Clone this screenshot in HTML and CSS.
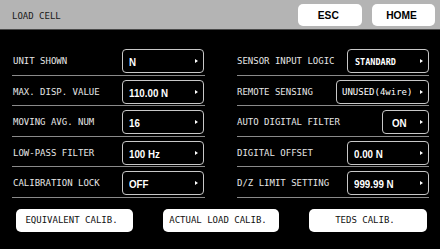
FILE: index.html
```html
<!DOCTYPE html>
<html>
<head>
<meta charset="utf-8">
<link rel="stylesheet" href="styles.css">
</head>
<body>
<div class="screen">
  <header class="top">
    <div class="title">LOAD CELL</div>
    <div class="top-btns">
      <button class="top-btn esc"><span class="cond">ESC</span></button>
      <button class="top-btn home"><span class="cond">HOME</span></button>
    </div>
  </header>
  <main class="grid">
    <div class="col left">
      <div class="row"><span class="label">UNIT SHOWN</span><div class="val w82"><span class="v">N</span><i class="arrow"></i></div></div>
      <div class="row"><span class="label">MAX. DISP. VALUE</span><div class="val w82"><span class="v">110.00 N</span><i class="arrow"></i></div></div>
      <div class="row"><span class="label">MOVING AVG. NUM</span><div class="val w82"><span class="v">16</span><i class="arrow"></i></div></div>
      <div class="row"><span class="label">LOW-PASS FILTER</span><div class="val w82"><span class="v">100 Hz</span><i class="arrow"></i></div></div>
      <div class="row"><span class="label">CALIBRATION LOCK</span><div class="val w82"><span class="v">OFF</span><i class="arrow"></i></div></div>
    </div>
    <div class="col right">
      <div class="row"><span class="label">SENSOR INPUT LOGIC</span><div class="val w82"><span class="m strong">STANDARD</span><i class="arrow"></i></div></div>
      <div class="row"><span class="label">REMOTE SENSING</span><div class="val w93"><span class="m">UNUSED(4wire)</span><i class="arrow"></i></div></div>
      <div class="row"><span class="label">AUTO DIGITAL FILTER</span><div class="val w47"><span class="v">ON</span><i class="arrow"></i></div></div>
      <div class="row"><span class="label">DIGITAL OFFSET</span><div class="val w82"><span class="v">0.00 N</span><i class="arrow"></i></div></div>
      <div class="row"><span class="label">D/Z LIMIT SETTING</span><div class="val w82"><span class="v">999.99 N</span><i class="arrow"></i></div></div>
    </div>
  </main>
  <footer class="actions">
    <button class="act b1">EQUIVALENT CALIB.</button>
    <button class="act b2">ACTUAL LOAD CALIB.</button>
    <button class="act b3">TEDS CALIB.</button>
  </footer>
</div>
</body>
</html>
```
FILE: styles.css
```css
html, body {
  margin: 0;
  padding: 0;
  background: #000;
}
.screen {
  width: 440px;
  height: 249px;
  background: #000;
  overflow: hidden;
  font-family: "DejaVu Sans Mono", "Liberation Mono", monospace;
}
.top {
  height: 29px;
  background: #b4b4b4;
  border-bottom: 1px solid #4a4a4a;
  display: flex;
  align-items: center;
  justify-content: space-between;
  padding: 0 5px 0 12px;
}
.title {
  font-size: 9px;
  color: #1a1a1a;
  padding-top: 3px;
}
.top-btns {
  display: flex;
  gap: 10px;
  align-items: center;
}
.top-btn {
  height: 22px;
  background: #fff;
  border: none;
  border-radius: 5px;
  padding: 0;
  margin: 0;
  font-family: "Liberation Sans", Arial, sans-serif;
  font-weight: bold;
  font-size: 11px;
  color: #000;
  display: flex;
  align-items: center;
  justify-content: center;
}
.top-btn.esc { width: 64px; padding-right: 3px; }
.top-btn.home { width: 63px; padding-right: 4px; }
.cond {
  display: inline-block;
  transform: scaleX(0.93);
}
.grid {
  display: grid;
  grid-template-columns: 193px 192px;
  column-gap: 32px;
  padding: 15px 0 0 12px;
}
.col {
  display: flex;
  flex-direction: column;
}
.row {
  display: flex;
  align-items: center;
  justify-content: space-between;
  padding: 4px 0 1.5px 0;
  border-bottom: 1px solid #8a8a8a;
}
.left .row { padding-left: 1px; }
.left .val { margin-right: 1px; }
.label {
  font-size: 9px;
  color: #e6e6e6;
}
.val {
  box-sizing: border-box;
  height: 24px;
  border: 1px solid #c8c8c8;
  border-radius: 4px;
  display: flex;
  align-items: center;
  justify-content: space-between;
  padding: 0 5px 0 6px;
  color: #fff;
}
.w82 { width: 82px; }
.w93 { width: 93px; padding-left: 5px; }
.w47 { width: 47px; padding-left: 9px; }
.v {
  font-family: "Liberation Sans", Arial, sans-serif;
  font-weight: bold;
  font-size: 11.5px;
  display: inline-block;
  transform: scaleX(0.85);
  transform-origin: left center;
  padding-top: 2px;
}
.m {
  font-size: 9px;
  color: #fff;
  padding-top: 1px;
}
.m.strong {
  font-weight: bold;
  font-size: 8.5px;
  padding-left: 1px;
}
.arrow {
  width: 0;
  height: 0;
  border-left: 3px solid #fff;
  border-top: 2.5px solid transparent;
  border-bottom: 2.5px solid transparent;
}
.actions {
  display: flex;
  gap: 30px;
  padding: 11px 0 0 16px;
}
.act {
  height: 23px;
  background: #fff;
  border: none;
  border-radius: 5px;
  padding: 0 6px 0 0;
  margin: 0;
  font-family: "DejaVu Sans Mono", "Liberation Mono", monospace;
  font-size: 9px;
  color: #111;
  display: flex;
  align-items: center;
  justify-content: center;
}
.b1 { width: 117px; }
.b2 { width: 116px; }
.b3 { width: 118px; }
```
